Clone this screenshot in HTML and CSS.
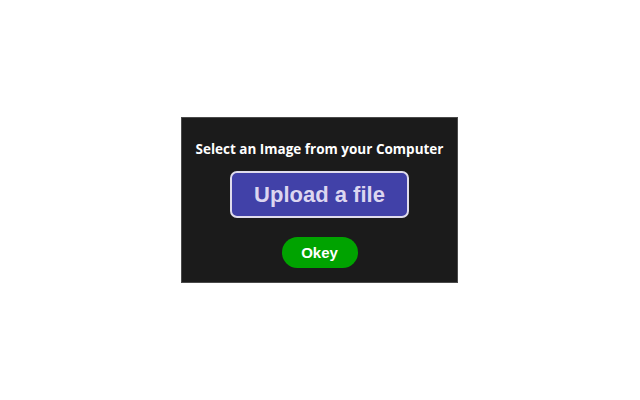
FILE: index.html
```html
<!DOCTYPE html>
<html>
<head>
<meta charset="utf-8">
<link rel="stylesheet" href="styles.css">
</head>
<body>
<div class="page">
  <div class="dialog">
    <div class="title">Select an Image from your Computer</div>
    <button class="upload">Upload a file</button>
    <button class="okey">Okey</button>
  </div>
</div>
</body>
</html>
```

FILE: styles.css
```css
html, body {
  margin: 0;
  padding: 0;
  background: #ffffff;
}
.page {
  width: 639px;
  height: 400px;
  display: flex;
  align-items: center;
  justify-content: center;
}
.dialog {
  box-sizing: border-box;
  width: 277px;
  height: 166px;
  background: #1b1b1b;
  border: 1px solid #4a4a4a;
  display: flex;
  flex-direction: column;
  align-items: center;
  padding-top: 22px;
}
.title {
  font-family: "Open Sans", "Liberation Sans", Arial, sans-serif;
  font-weight: bold;
  font-size: 13.5px;
  line-height: 18px;
  color: #ffffff;
}
.upload {
  box-sizing: border-box;
  margin-top: 13px;
  width: 179px;
  height: 47px;
  background: #4141a8;
  border: 2px solid #e0dcec;
  border-radius: 7px;
  color: #dcd6f0;
  font-family: "Liberation Sans", Arial, sans-serif;
  font-weight: bold;
  font-size: 22px;
  padding: 0;
}
.okey {
  box-sizing: border-box;
  margin-top: 19px;
  width: 76px;
  height: 31px;
  background: #00a300;
  border: none;
  border-radius: 16px;
  color: #ffffff;
  font-family: "Liberation Sans", Arial, sans-serif;
  font-weight: bold;
  font-size: 15px;
  padding: 0;
}
```
